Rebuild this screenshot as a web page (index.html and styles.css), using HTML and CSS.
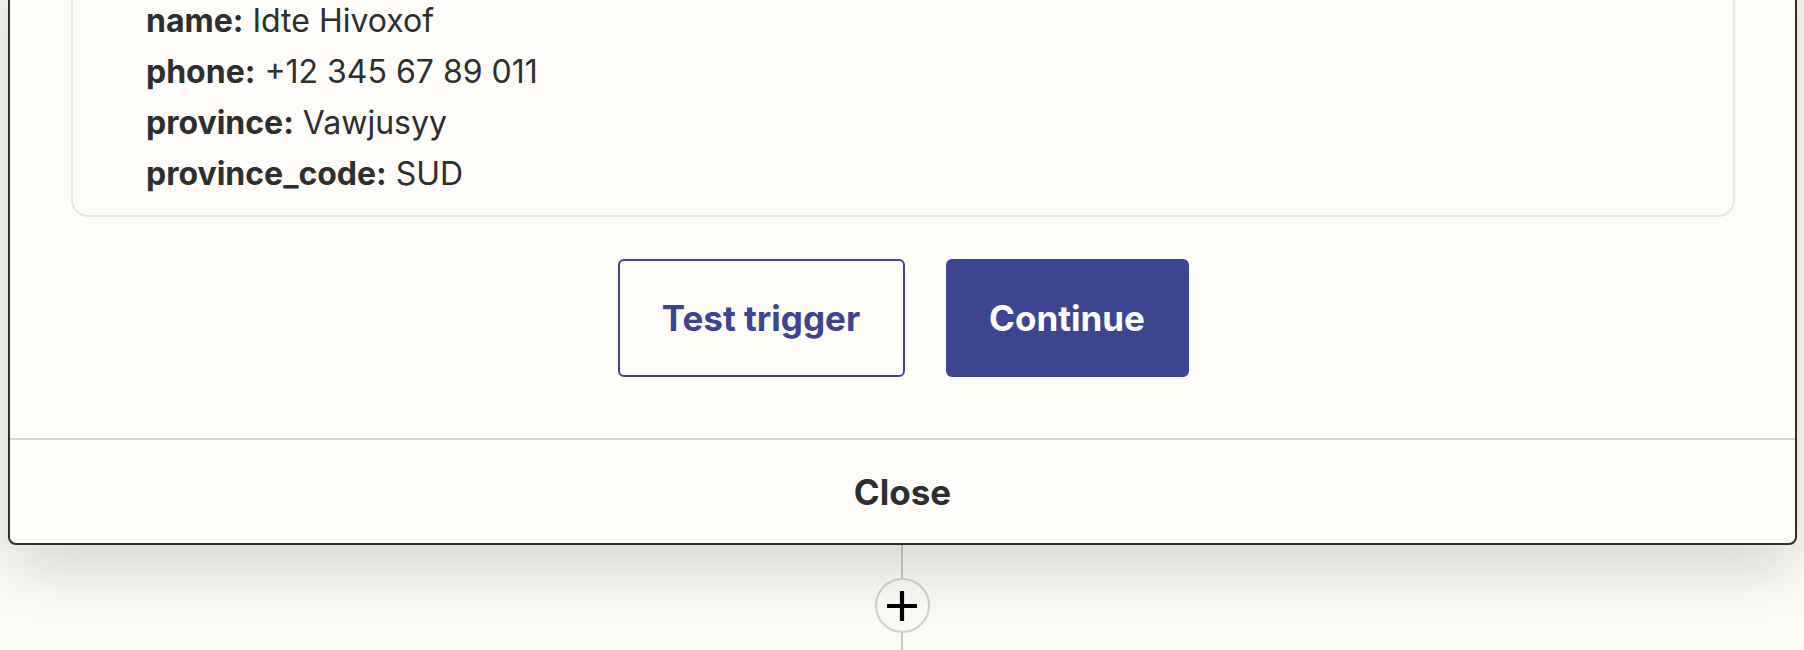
FILE: index.html
```html
<!DOCTYPE html>
<html lang="en">
<head>
<meta charset="utf-8">
<title>Test trigger</title>
<link rel="stylesheet" href="styles.css">
</head>
<body>
<div class="canvas">
  <section class="modal">
    <div class="modal-body">
      <div class="record">
        <div class="field"><span class="key">name:</span> Idte Hivoxof</div>
        <div class="field"><span class="key">phone:</span> +12 345 67 89 011</div>
        <div class="field"><span class="key">province:</span> Vawjusyy</div>
        <div class="field"><span class="key">province_code:</span> SUD</div>
      </div>
      <div class="actions">
        <button class="btn btn-outline" type="button">Test trigger</button>
        <button class="btn btn-primary" type="button">Continue</button>
      </div>
    </div>
    <div class="modal-footer">
      <button class="close" type="button">Close</button>
    </div>
  </section>
  <div class="connector">
    <div class="line line-top"></div>
    <button class="add" type="button" aria-label="Add step">
      <svg viewBox="0 0 32 32" width="32" height="32" aria-hidden="true">
        <path d="M16 1v30M1 16h30" stroke="#000" stroke-width="4.2" fill="none"/>
      </svg>
    </button>
    <div class="line line-bottom"></div>
  </div>
</div>
</body>
</html>
```
FILE: styles.css
```css
* { box-sizing: border-box; }

html, body {
  margin: 0;
  padding: 0;
  height: 100%;
  overflow: hidden;
}

body {
  background: #fbfaf7;
  font-family: Inter, "Noto Sans", sans-serif;
  color: #2d2e2e;
}

.canvas {
  display: flex;
  flex-direction: column;
  align-items: stretch;
}

.modal {
  margin: -40px 7px 0 8px;
  background: #fffdf9;
  border: 2px solid #2d2e2e;
  border-radius: 8px;
  box-shadow: 0 22px 60px rgba(40, 35, 25, 0.17);
  position: relative;
  z-index: 1;
}

.modal-body {
  padding: 0 60px 61px 61px;
}

.record {
  border: 2px solid #e9e7e3;
  border-radius: 17px;
  background: #fffdf9;
  padding: 31px 73px 16px 73px;
  font-size: 32px;
  line-height: 51px;
}

.field {
  white-space: nowrap;
}

.key {
  font-weight: 700;
}

.actions {
  display: flex;
  justify-content: center;
  gap: 41px;
  margin-top: 42px;
}

.btn {
  font-family: Inter, "Noto Sans", sans-serif;
  font-size: 35px;
  font-weight: 700;
  height: 118px;
  border-radius: 6px;
  padding: 0;
  white-space: nowrap;
  text-align: center;
  cursor: pointer;
  line-height: 1;
}

.btn-outline {
  background: #fffdf9;
  color: #3d4592;
  border: 2px solid #3d4592;
  width: 287px;
}

.btn-primary {
  background: #3d4592;
  color: #ffffff;
  border: 2px solid #3d4592;
  width: 243px;
}

.modal-footer {
  border-top: 2px solid #d7d5d1;
  height: 105px;
  display: flex;
  align-items: center;
  justify-content: center;
}

.close {
  background: none;
  border: 0;
  font-family: Inter, "Noto Sans", sans-serif;
  font-size: 35px;
  font-weight: 700;
  color: #2d2e2e;
  padding: 0;
  cursor: pointer;
}

.connector {
  display: flex;
  flex-direction: column;
  align-items: center;
}

.line {
  width: 2px;
  background: #c9c8c4;
}

.line-top { height: 33px; }
.line-bottom { height: 40px; }

.add {
  width: 55px;
  height: 55px;
  border-radius: 50%;
  border: 2px solid #d2d0cc;
  background: #fbfaf7;
  display: flex;
  align-items: center;
  justify-content: center;
  padding: 0;
  cursor: pointer;
}
```
